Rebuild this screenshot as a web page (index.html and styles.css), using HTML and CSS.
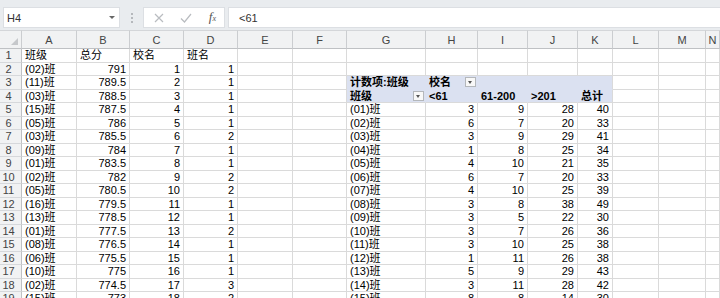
FILE: index.html
```html
<!DOCTYPE html>
<html>
<head>
<meta charset="utf-8">
<title>Sheet1 - 透视表</title>
<link rel="stylesheet" href="styles.css">
</head>
<body>
<div class="toolbar">
	<div class="namebox"><span>H4</span><span class="caret"></span></div>
	<div class="grip"><span></span><span></span><span></span></div>
	<div class="fxbox">
		<svg class="ico" width="10" height="10" viewBox="0 0 10 10"><path d="M1 1L9 9M9 1L1 9" stroke="#b9bcc0" stroke-width="1.2" fill="none"/></svg>
		<svg class="ico" width="12" height="10" viewBox="0 0 12 10"><path d="M1 5.5L4.5 9L11 1" stroke="#b9bcc0" stroke-width="1.2" fill="none"/></svg>
		<span class="fx">f<sub>x</sub></span>
	</div>
	<div class="formula">&lt;61</div>
</div>
<div id="sheet" class="sheet"></div>
<script src="script.js"></script>
</body>
</html>
```

FILE: styles.css
```css
/* Spreadsheet view: formula bar + grid with a pivot table */

body {
	margin: 0;
	width: 720px;
	height: 298px;
	overflow: hidden;
	background: #fff;
	font-family: "Liberation Sans", "Noto Sans CJK SC", sans-serif;
	font-size: 11px;
	color: #000;
}

/* Formula bar */
.toolbar {
	display: flex;
	align-items: center;
	height: 30px;
	padding: 7px 0 2px 3px;
	box-sizing: border-box;
	background: #e9ecef;
}
.namebox, .fxbox, .formula {
	height: 21px;
	box-sizing: border-box;
	background: #fff;
	border: 1px solid #dcdfe3;
	display: flex;
	align-items: center;
}
.namebox {
	width: 117px;
	padding: 0 4px 0 3px;
	justify-content: space-between;
	color: #333;
}
.caret {
	width: 0;
	height: 0;
	border-left: 3px solid transparent;
	border-right: 3px solid transparent;
	border-top: 3px solid #666;
}
.grip {
	width: 23px;
	display: flex;
	flex-direction: column;
	align-items: center;
	gap: 2px;
}
.grip span {
	width: 2px;
	height: 2px;
	background: #b5b8bc;
}
.fxbox {
	width: 82px;
	margin-right: 3px;
	padding: 0 8px 0 10px;
	justify-content: space-between;
}
.fx {
	font-family: "Liberation Serif", serif;
	font-style: italic;
	font-size: 13px;
	line-height: 14px;
	color: #555;
}
.fx sub {
	font-size: 8px;
	vertical-align: 0;
}
.formula {
	flex: 1;
	padding-left: 10px;
	border-right: none;
	color: #333;
}

/* Grid */
.row {
	display: grid;
	grid-template-columns: 22px 55px 53px 54px 54px 55px 54px 79px 52px 50px 50px 35px 46px 47px 14px;
	height: 13.5px;
}
.row.head {
	height: 19px;
}
.c {
	display: flex;
	align-items: center;
	padding: 0 3px;
	border-right: 1px solid #dadada;
	border-bottom: 1px solid #dadada;
	box-sizing: border-box;
	white-space: nowrap;
	line-height: 12px;
	min-width: 0;
}
.c.num {
	justify-content: flex-end;
}
.head .c {
	justify-content: center;
	background: #f1f2f3;
	color: #444;
	border-right-color: #cbcdd0;
	border-bottom-color: #bfc1c4;
	border-top: 1px solid #d4d6d9;
}
.head .corner {
	position: relative;
}
.head .corner::after {
	content: "";
	position: absolute;
	right: 3px;
	bottom: 3px;
	border-left: 7px solid transparent;
	border-bottom: 7px solid #c6c8cb;
}
.c.rn {
	background: #f1f2f3;
	color: #444;
	justify-content: center;
	padding: 0 4px 0 0;
	border-right-color: #bfc1c4;
	border-bottom-color: #d6d8db;
}

/* Pivot table header */
.c.ph {
	background: #dbe1f1;
	font-weight: bold;
	border-right-color: #dbe1f1;
}
.c.ph.top {
	border-bottom-color: #dbe1f1;
}
.c.ph.last {
	border-right-color: #dadada;
}
.dd {
	position: relative;
	width: 11px;
	height: 10px;
	margin-left: auto;
	margin-right: -2px;
	box-sizing: border-box;
	border: 1px solid #b4b7bb;
	background: #f8f8f8;
	flex: none;
}
.dd::after {
	content: "";
	position: absolute;
	left: 2px;
	top: 3px;
	border-left: 2.5px solid transparent;
	border-right: 2.5px solid transparent;
	border-top: 3px solid #555;
}
```

FILE: script.js
```js
// Columns shown in the window
var letters = ['', 'A', 'B', 'C', 'D', 'E', 'F', 'G', 'H', 'I', 'J', 'K', 'L', 'M', 'N'];

// Source data in A:D, starting at row 1
var scores = [
	['班级', '总分', '校名', '班名'],
	['(02)班', 791, 1, 1],
	['(11)班', 789.5, 2, 1],
	['(03)班', 788.5, 3, 1],
	['(15)班', 787.5, 4, 1],
	['(05)班', 786, 5, 1],
	['(03)班', 785.5, 6, 2],
	['(09)班', 784, 7, 1],
	['(01)班', 783.5, 8, 1],
	['(02)班', 782, 9, 2],
	['(05)班', 780.5, 10, 2],
	['(16)班', 779.5, 11, 1],
	['(13)班', 778.5, 12, 1],
	['(01)班', 777.5, 13, 2],
	['(08)班', 776.5, 14, 1],
	['(06)班', 775.5, 15, 1],
	['(10)班', 775, 16, 1],
	['(02)班', 774.5, 17, 3],
	['(15)班', 773, 18, 2]
];

// Pivot body in G:K, starting at row 5
var pivot = [
	['(01)班', 3, 9, 28, 40],
	['(02)班', 6, 7, 20, 33],
	['(03)班', 3, 9, 29, 41],
	['(04)班', 1, 8, 25, 34],
	['(05)班', 4, 10, 21, 35],
	['(06)班', 6, 7, 20, 33],
	['(07)班', 4, 10, 25, 39],
	['(08)班', 3, 8, 38, 49],
	['(09)班', 3, 5, 22, 30],
	['(10)班', 3, 7, 26, 36],
	['(11)班', 3, 10, 25, 38],
	['(12)班', 1, 11, 26, 38],
	['(13)班', 5, 9, 29, 43],
	['(14)班', 3, 11, 28, 42],
	['(15)班', 8, 8, 14, 30]
];

var sheet = document.getElementById('sheet');

function makeCell(value, cls, button) {
	var d = document.createElement('div');
	d.className = 'c' + (cls ? ' ' + cls : '');
	if (typeof value === 'number' && cls !== 'rn') d.className += ' num';
	if (value !== null && value !== undefined && value !== '') {
		var s = document.createElement('span');
		s.textContent = value;
		d.appendChild(s);
	}
	if (button) {
		var b = document.createElement('span');
		b.className = 'dd';
		d.appendChild(b);
	}
	return d;
}

// Column letters
var head = document.createElement('div');
head.className = 'row head';
letters.forEach(function (l, i) {
	head.appendChild(makeCell(l, i === 0 ? 'corner' : ''));
});
sheet.appendChild(head);

for (var r = 1; r <= 19; r++) {
	var row = document.createElement('div');
	row.className = 'row';
	row.appendChild(makeCell(r, 'rn'));
	for (var c = 1; c < letters.length; c++) {
		var v = null, cls = '', btn = false;
		if (c <= 4 && scores[r - 1]) v = scores[r - 1][c - 1];
		if (c >= 7 && c <= 11) {
			var k = c - 7;
			if (r === 3) {
				cls = 'ph top';
				if (k === 0) v = '计数项:班级';
				if (k === 1) { v = '校名'; btn = true; }
			} else if (r === 4) {
				cls = 'ph';
				v = ['班级', '<61', '61-200', '>201', '总计'][k];
				btn = k === 0;
			} else if (r >= 5 && pivot[r - 5]) {
				v = pivot[r - 5][k];
			}
			if (cls && k === 4) cls += ' last';
		}
		row.appendChild(makeCell(v, cls, btn));
	}
	sheet.appendChild(row);
}
```
